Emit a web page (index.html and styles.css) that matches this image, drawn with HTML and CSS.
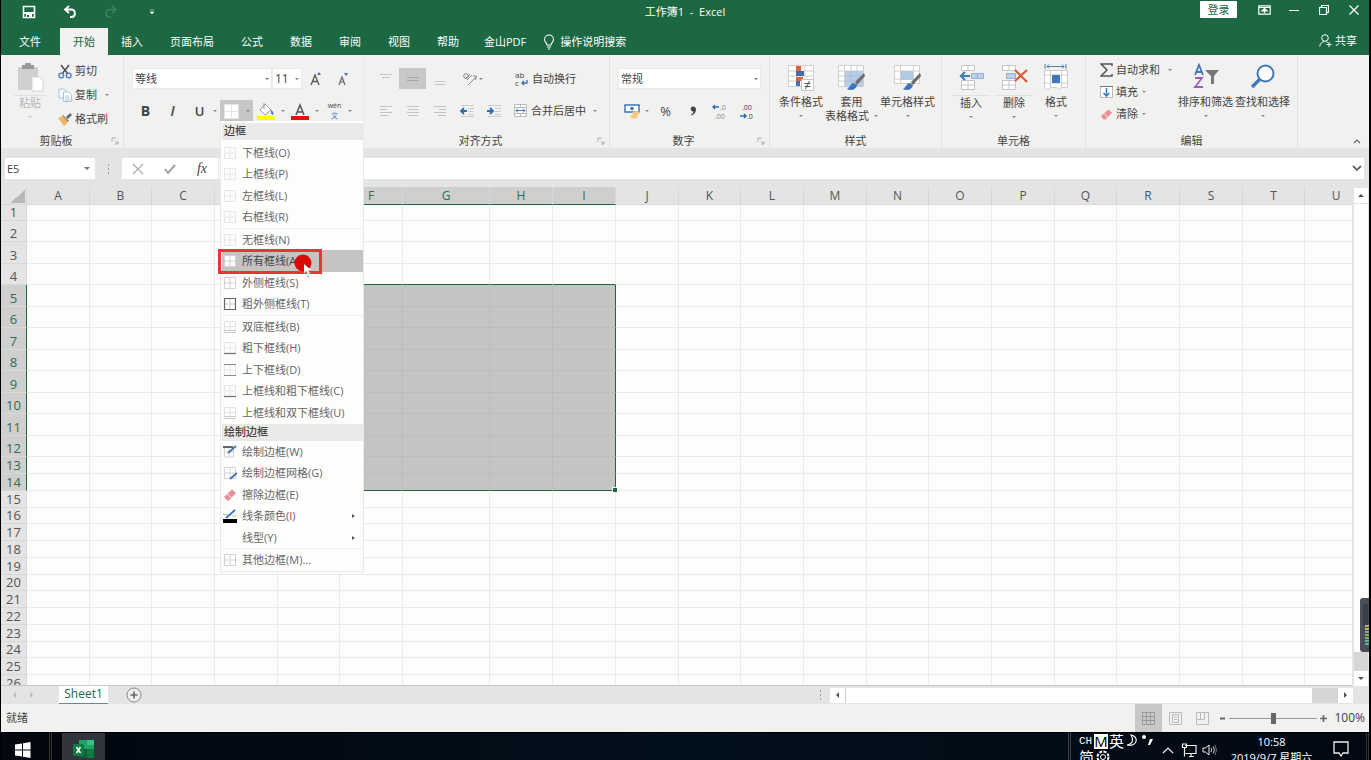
FILE: index.html
```html
<!DOCTYPE html>
<html lang="zh-CN">
<head>
<meta charset="utf-8">
<title>工作簿1 - Excel</title>
<link rel="stylesheet" href="styles.css">
</head>
<body>
<svg class="defs" aria-hidden="true">
  <symbol id="cells" viewBox="0 0 14 14"><path d="M1.500 1.500h11v11h-11zM7 1.500v11M1.500 7h11" fill="#fff" stroke="#cfcfd4"/></symbol>
  <symbol id="cells-none" viewBox="0 0 14 14"><path d="M1.500 1.500h11v11h-11zM7 1.500v11M1.500 7h11" fill="none" stroke="#e6e6e8"/></symbol>
  <symbol id="cells-thick" viewBox="0 0 14 14"><path d="M7 2v10M2 7h10" stroke="#ccc"/><path d="M1.500 1.500h11v11h-11z" fill="none" stroke="#666" stroke-width="1.200"/></symbol>
  <symbol id="cells-bottom" viewBox="0 0 14 14"><path d="M1.500 12V1.500h11V12M7 2v10M2 7h10" fill="none" stroke="#e6e6e8"/><path d="M1 12.500h12" stroke="#777" stroke-width="1.300"/></symbol>
  <symbol id="cells-topbottom" viewBox="0 0 14 14"><path d="M1.500 2v10M12.500 2v10M7 2v10M2 7h10" stroke="#e6e6e8"/><path d="M1 1.500h12M1 12.500h12" stroke="#888"/></symbol>
  <symbol id="cells-double" viewBox="0 0 14 14"><path d="M1.500 12V1.500h11V12M7 2v8M2 6.500h10" fill="none" stroke="#e3e3e6"/><path d="M1 10.500h12M1 12.500h12" stroke="#ccc"/></symbol>
  <symbol id="eraser" viewBox="0 0 14 14"><path d="M9 1.500 13 5 6 12.500H4L1 9z" fill="#e8909a"/><path d="M4.500 6 8.500 10" stroke="#fff"/></symbol>
  <symbol id="launcher" viewBox="0 0 8 8"><path d="M1 5V1h4M4 4l3 3M7 4v3H4" fill="none" stroke="#b0b0b0"/></symbol>
  <symbol id="brush" viewBox="0 0 20 20"><path d="m18 1-9 9 2 3 8-9z" fill="#6c6c6c"/><path d="M8 11c-3 0-3 3-7 6 4 2 9 1 10-4z" fill="#3f76b9"/></symbol>
</svg>
<div class="app">
  <header class="titlebar">
    <div class="quick">
      <button aria-label="保存"><svg width="14" height="14" viewBox="0 0 14 14"><path d="M1.500 1.500h11v11h-11z" fill="none" stroke="#fff" stroke-width="1.600"/><path d="M2 7h10v2H2zM4 9h6v4H4z" fill="#fff"/><path d="M5 10h2v2H5z" fill="#1b6843"/></svg></button>
      <button aria-label="撤消"><svg width="14" height="14" viewBox="0 0 14 14"><path d="M6 1 2 4.500 6 8M2 4.500h6c5 0 5 7 1 7.500H7" fill="none" stroke="#fff" stroke-width="1.800"/></svg></button>
      <button aria-label="恢复"><svg width="14" height="14" viewBox="0 0 14 14"><path d="m8 1 4 3.500L8 8M12 4.500H6C1 4.500 1 11.500 5 12h2" fill="none" stroke="#42805f" stroke-width="1.600"/></svg></button>
      <button aria-label="自定义快速访问工具栏"><svg width="6" height="6" viewBox="0 0 6 6"><path d="M1 1h4M1 3h4L3 5z" fill="#fff" stroke="#fff" stroke-width=".5"/></svg></button>
    </div>
    <h1 class="title">工作簿1 &nbsp;-&nbsp; Excel</h1>
    <div class="window-actions">
      <button class="login">登录</button>
      <button aria-label="功能区显示选项"><svg width="13" height="10" viewBox="0 0 13 10"><path d="M.8.8h11.400v8.400H.8zM1 2.500h11M6.500 8V4M4.500 5.500l2-2 2 2M3 6h7" fill="none" stroke="#fff" stroke-width="1.200"/></svg></button>
      <button aria-label="最小化"><svg width="10" height="10" viewBox="0 0 10 10"><path d="M0 5.500h10" stroke="#fff"/></svg></button>
      <button aria-label="还原"><svg width="10" height="10" viewBox="0 0 10 10"><path d="M.5 2.500h7v7h-7zM2.500 2V.5h7v7H8" fill="none" stroke="#fff" stroke-width="1.200"/></svg></button>
      <button aria-label="关闭"><svg width="10" height="10" viewBox="0 0 10 10"><path d="m.5.5 9 9m0-9-9 9" stroke="#fff" stroke-width="1.200"/></svg></button>
    </div>
  </header>

  <nav class="tabs">
    <button class="file">文件</button>
    <button class="active">开始</button>
    <button>插入</button>
    <button>页面布局</button>
    <button>公式</button>
    <button>数据</button>
    <button>审阅</button>
    <button>视图</button>
    <button>帮助</button>
    <button class="pdf">金山PDF</button>
    <button class="tell"><svg width="12" height="16" viewBox="0 0 12 16"><path d="M4 11C4 9 1.500 8 1.500 5.500a4.500 4.500 0 0 1 9 0C10.500 8 8 9 8 11zM4 13h4M5 15h2" fill="none" stroke="#fff" stroke-width="1.100"/></svg>操作说明搜索</button>
    <button class="share"><svg width="13" height="13" viewBox="0 0 13 13"><circle cx="6" cy="4" r="3.300" fill="none" stroke="#fff"/><path d="M.8 12.500C1 9.500 3 7.800 5.500 7.500M7 7.500l1.500 1M10 8v5M7.500 10.500h5" fill="none" stroke="#fff"/></svg>共享</button>
  </nav>

  <section class="ribbon" aria-label="开始">
    <div class="group clipboard">
      <div class="tools">
        <button class="big disabled"><svg width="28" height="30" viewBox="0 0 28 30"><path d="M2 4h20v23H2z" fill="#cfcfd1"/><path d="M6 2h3a3 3 0 0 1 6 0h3v4H6z" fill="#9a9a9c"/><path d="M16 14h7l4 4v10H16z" fill="#fff" stroke="#d5d5d7"/></svg><span class="split">粘贴</span><i class="caret"></i></button>
        <div class="stack clip-stack">
          <button><svg width="14" height="15" viewBox="0 0 14 15"><path d="m3 1 7 9M11 1 4 10" stroke="#555" stroke-width="1.600"/><circle cx="3.300" cy="11.500" r="2.400" fill="none" stroke="#4a7fb8" stroke-width="1.300"/><circle cx="10.700" cy="11.500" r="2.400" fill="none" stroke="#4a7fb8" stroke-width="1.300"/></svg>剪切</button>
          <button><svg width="14" height="14" viewBox="0 0 14 14"><path d="M1 1h5l2 2v7H1z" fill="#f6fafd" stroke="#a9c4dd"/><path d="M5.500 4h5l3 3v6.500h-8z" fill="#fff" stroke="#a9c4dd"/><path d="M7 8h4M7 10h5M7 12h5" stroke="#a9c4dd"/></svg>复制<i class="caret"></i></button>
          <button><svg width="14" height="14" viewBox="0 0 14 14"><path d="m8 5 4-4 2 2-4 4z" fill="#6a6a6a"/><path d="m5 3 6 6-2 1-5-6z" fill="#777"/><path d="M0 6l5-2 5 6-4 4z" fill="#efb662"/></svg>格式刷</button>
        </div>
      </div>
      <div class="caption"><span>剪贴板</span><svg width="8" height="8"><use href="#launcher"/></svg></div>
    </div>

    <div class="group font">
      <div class="tools rows">
        <div class="line">
          <span class="combo font-name"><select aria-label="字体"><option>等线</option></select></span><span class="combo font-size"><select aria-label="字号"><option>11</option></select></span>
          <button class="slot" aria-label="增大字号"><svg width="16" height="18" viewBox="0 0 16 18"><path d="m3 15 4-10 4 10M4.500 11.500h5" fill="none" stroke="#555" stroke-width="1.300"/><path d="m9 5 2-3 2 3z" fill="#3f76b9"/></svg></button>
          <button class="slot" aria-label="减小字号"><svg width="16" height="18" viewBox="0 0 16 18"><path d="m4 15 3-8 3 8M5 12h4" fill="none" stroke="#666" stroke-width="1.200"/><path d="m9 3 2 3 2-3z" fill="#3f76b9"/></svg></button>
        </div>
        <div class="line">
          <button class="slot bold">B</button>
          <button class="slot italic">I</button>
          <button class="slot underline">U</button><i class="caret"></i>
          <div class="border-picker">
            <button class="border-button" aria-label="边框" aria-expanded="true"><svg width="16" height="16" viewBox="0 0 16 16"><path d="M.5 1.500h14v14H.5zM7.500 1.500v14M.5 8.500h14" fill="#fff" stroke="#e4e4e4"/></svg><i class="caret"></i></button>
            <div class="menu" role="menu">
              <h2>边框</h2>
              <div class="menu-group">
                <button><svg><use href="#cells-none"/></svg>下框线(O)</button>
                <button><svg><use href="#cells-none"/></svg>上框线(P)</button>
                <button><svg><use href="#cells-none"/></svg>左框线(L)</button>
                <button><svg><use href="#cells-none"/></svg>右框线(R)</button>
              </div>
              <div class="menu-group">
                <button><svg><use href="#cells-none"/></svg>无框线(N)</button>
                <button class="hover"><svg><use href="#cells"/></svg>所有框线(A)<span class="focus-box"></span><svg class="pointer" viewBox="0 0 20 26"><circle cx="9" cy="10" r="8.500" fill="#d90b06"/><path d="M10 11v9l2-2 2 4 2-1-2-4h3z" fill="#fff"/><path d="m10 21 2-2M13 23l2 1M16 20l1-1" stroke="#999"/></svg></button>
                <button><svg><use href="#cells"/></svg>外侧框线(S)</button>
                <button><svg><use href="#cells-thick"/></svg>粗外侧框线(T)</button>
              </div>
              <div class="menu-group last">
                <button><svg><use href="#cells-double"/></svg>双底框线(B)</button>
                <button><svg><use href="#cells-bottom"/></svg>粗下框线(H)</button>
                <button><svg><use href="#cells-topbottom"/></svg>上下框线(D)</button>
                <button><svg><use href="#cells-bottom"/></svg>上框线和粗下框线(C)</button>
                <button><svg><use href="#cells-double"/></svg>上框线和双下框线(U)</button>
              </div>
              <h2>绘制边框</h2>
              <div class="menu-group">
                <button><svg viewBox="0 0 14 14"><path d="M1.500 2v10h9V5M6 3v9M2 7h8" fill="none" stroke="#d5d5d8"/><path d="M0 2h10" stroke="#666" stroke-width="2"/><path d="M5 8 13 1" stroke="#3f76b9" stroke-width="2"/></svg>绘制边框(W)</button>
                <button><svg viewBox="0 0 14 14"><path d="M1.500 1.500h11v11h-11zM7 2v10M2 7h10" fill="none" stroke="#d5d5d8"/><path d="M7 13 14 7" stroke="#3f76b9" stroke-width="2"/></svg>绘制边框网格(G)</button>
                <button><svg><use href="#eraser"/></svg>擦除边框(E)</button>
                <button><svg viewBox="0 0 14 14"><path d="M0 10h14v4H0z"/><path d="M3 9 12 1" stroke="#3f76b9" stroke-width="1.800"/><path d="M0 5.500h5M9 7h4" stroke="#bbb"/></svg>线条颜色(I)<i class="sub"></i></button>
                <button><svg></svg>线型(Y)<i class="sub"></i></button>
              </div>
              <div class="menu-group last">
                <button><svg><use href="#cells"/></svg>其他边框(M)...</button>
              </div>
            </div>
          </div>
          <button class="slot fill" aria-label="填充颜色"><svg width="18" height="18" viewBox="0 0 18 18"><path d="m8 2 6 6-6 5-5-5zM7 1v6" fill="#fff" stroke="#999"/><path d="M14 8c2 1 3 3 2 5-2 0-2-3-2-5z" fill="#3f76b9"/><path d="M0 14h18v4H0z" fill="#ff0"/></svg></button><i class="caret"></i>
          <button class="slot fill" aria-label="字体颜色"><svg width="18" height="18" viewBox="0 0 18 18"><path d="M5 13 9 3l4 10M6.500 10h5" fill="none" stroke="#555" stroke-width="1.500"/><path d="M0 14h18v4H0z" fill="#e8100c"/></svg></button><i class="caret"></i>
          <button class="slot pinyin" aria-label="拼音指南"><span>wén</span><span class="wen">文</span></button><i class="caret"></i>
        </div>
      </div>
    </div>

    <div class="group align">
      <div class="tools rows">
        <div class="line">
          <button class="slot" aria-label="顶端对齐"><svg width="14" height="18" viewBox="0 0 14 18"><path d="M1 4.500h12M3 7.500h8" stroke="#c4c4c4"/></svg></button>
          <button class="slot pressed" aria-label="垂直居中"><svg width="14" height="14" viewBox="0 0 14 14"><path d="M1 5.500h12M1 8.500h12" stroke="#a6a6a6"/></svg></button>
          <button class="slot" aria-label="底端对齐"><svg width="14" height="18" viewBox="0 0 14 18"><path d="M2 11.500h10M2 14.500h10" stroke="#c4c4c4"/></svg></button>
          <button class="slot orient" aria-label="方向"><svg width="16" height="16" viewBox="0 0 16 16"><path d="M6 14 14 6M11 5l3.500 0-1 4" fill="none" stroke="#888"/><circle cx="4" cy="5" r="2.300" fill="none" stroke="#888"/><path d="m3 8 5-5M5 9l5-5" stroke="#888"/></svg><i class="caret"></i></button>
          <button class="labelled"><svg width="14" height="20" viewBox="0 0 14 20"><text x="0" y="9" class="letters">ab</text><text x="0" y="17" class="letters">c</text><path d="M12 11v3H7m2-2-2 2 2 2" fill="none" stroke="#3f76b9" stroke-width="1.400"/></svg>自动换行</button>
        </div>
        <div class="line">
          <button class="slot" aria-label="左对齐"><svg width="14" height="14" viewBox="0 0 14 14"><path d="M1 2.500h12M1 5.500h7M1 8.500h12M1 11.500h8" stroke="#c4c4c4"/></svg></button>
          <button class="slot" aria-label="居中"><svg width="14" height="14" viewBox="0 0 14 14"><path d="M1 2.500h12M2 5.500h10M1 8.500h12M2 11.500h10" stroke="#c4c4c4"/></svg></button>
          <button class="slot" aria-label="右对齐"><svg width="14" height="14" viewBox="0 0 14 14"><path d="M1 2.500h12M6 5.500h7M1 8.500h12M5 11.500h8" stroke="#c4c4c4"/></svg></button>
          <button class="slot" aria-label="减少缩进"><svg width="16" height="14" viewBox="0 0 16 14"><path d="M2 1.500h13M9 4.500h6M9 7.500h6M9 10.500h6M2 12.500h13" stroke="#ccc"/><path d="M8 7H2m3-3L2 7l3 3" fill="none" stroke="#2f6eb5" stroke-width="1.800"/></svg></button>
          <button class="slot" aria-label="增加缩进"><svg width="16" height="14" viewBox="0 0 16 14"><path d="M2 1.500h13M9 4.500h6M9 7.500h6M9 10.500h6M2 12.500h13" stroke="#ccc"/><path d="M1 7h6M4 4l3 3-3 3" fill="none" stroke="#2f6eb5" stroke-width="1.800"/></svg></button>
          <button class="labelled merge"><svg width="13" height="13" viewBox="0 0 13 13"><path d="M.5.500h12v12H.5zM.5 3.500h12M.5 9.500h12M6.500 1v3M6.500 9v3" fill="#fff" stroke="#bbb"/><path d="M2 6.500h9M4 4.500l-2 2 2 2M9 4.500l2 2-2 2" fill="none" stroke="#3f76b9"/></svg>合并后居中<i class="caret"></i></button>
        </div>
      </div>
      <div class="caption"><span>对齐方式</span><svg width="8" height="8"><use href="#launcher"/></svg></div>
    </div>

    <div class="group number">
      <div class="tools rows">
        <div class="line"><span class="combo format"><select aria-label="数字格式"><option>常规</option></select></span></div>
        <div class="line">
          <button class="slot" aria-label="会计数字格式"><svg width="16" height="16" viewBox="0 0 16 16"><path d="M1 2h14v7H1z" fill="#fff" stroke="#3f76b9" stroke-width="1.500"/><circle cx="8" cy="5.500" r="1.800" fill="#3f76b9"/><ellipse cx="12" cy="10" rx="3.500" ry="2" fill="#f0c987"/><ellipse cx="10" cy="13.500" rx="3.500" ry="2" fill="#f0c987"/></svg></button><i class="caret"></i>
          <button class="slot percent">%</button>
          <button class="slot" aria-label="千位分隔样式"><svg width="10" height="14" viewBox="0 0 10 14"><path d="M5 2.500a2.500 2.500 0 1 0 .5 5C5.500 9 4 10 3 10.500l.5 1C6 10.500 8 8.500 8 5.500c0-2-1.500-3-3-3z" fill="#444"/></svg></button>
          <button class="slot" aria-label="增加小数位数"><svg width="16" height="20" viewBox="0 0 16 20"><path d="M7 6H1m2-2L1 6l2 2" fill="none" stroke="#2f6eb5" stroke-width="1.500"/><text x="8" y="9" class="tiny">.0</text><text x="3" y="18" class="tiny">.00</text></svg></button>
          <button class="slot" aria-label="减少小数位数"><svg width="16" height="20" viewBox="0 0 16 20"><path d="M1 15h6M5 13l2 2-2 2" fill="none" stroke="#2f6eb5" stroke-width="1.500"/><text x="3" y="9" class="tiny dark">.00</text><text x="8" y="18" class="tiny dark">.0</text></svg></button>
        </div>
      </div>
      <div class="caption"><span>数字</span><svg width="8" height="8"><use href="#launcher"/></svg></div>
    </div>

    <div class="group styles">
      <div class="tools">
        <button class="big"><svg width="28" height="30" viewBox="0 0 28 30"><path d="M1.500 2.500h25v21h-25zM9.500 2v22M18 2v22M2 8h25M2 13h25M2 18h25" fill="#fff" stroke="#cfcfd1"/><path d="M9 3h5v5H9zM9 14h7v4H9z" fill="#e0603a"/><path d="M9 8h8v5H9zM9 18h4v5H9z" fill="#3f6fb0"/><path d="M14.500 16.500h12v11h-12z" fill="#fff" stroke="#c4c4c4"/><path d="M17.500 20.500h6M17.500 23.500h6M22.500 18l-4 8" stroke="#555"/></svg><span>条件格式</span><i class="caret"></i></button>
        <button class="big"><svg width="28" height="30" viewBox="0 0 28 30"><path d="M.5 2.500h25v21H.5zM6.500 2v22M13 2v22M19 2v22M1 8h25M1 13h25M1 18h25" fill="#fff" stroke="#cfcfd1"/><path d="M7 8h18v16H7z" fill="#b9cde5"/><path d="M7 13h18M7 18h18M13 8v16M19 8v16" stroke="#a9c0dc"/><use href="#brush" x="8" y="9" width="20" height="20"/></svg><span>套用</span><span>表格格式<i class="caret"></i></span></button>
        <button class="big"><svg width="28" height="30" viewBox="0 0 28 30"><path d="M.5 2.500h25v18H.5zM6.500 2v18M19.500 2v18M1 8h25M1 16h25" fill="#fff" stroke="#cfcfd1"/><path d="M7 8h12v9H7z" fill="#b3cae6"/><use href="#brush" x="8" y="9" width="20" height="20"/></svg><span>单元格样式</span><i class="caret"></i></button>
      </div>
      <div class="caption"><span>样式</span></div>
    </div>

    <div class="group cells">
      <div class="tools">
        <button class="big"><svg width="28" height="30" viewBox="0 0 28 30"><path d="M4.500 2.500h13v5h-13zM11 2v5M4.500 17.500h13v9h-13zM11 17v9M4 22h13" fill="#fff" stroke="#c4c4c6"/><path d="M14.500 10.500h12v5h-12zM20.500 10v5" fill="#bcd2ec" stroke="#94b1d3"/><path d="M13 13H3m5-4-4 4 4 4" fill="none" stroke="#3f7fc0" stroke-width="2.200"/></svg><span class="split">插入</span><i class="caret"></i></button>
        <button class="big"><svg width="28" height="30" viewBox="0 0 28 30"><path d="M2.500 2.500h13v5h-13zM9 2v5M2.500 17.500h13v9h-13zM9 17v9M2 22h13" fill="#fff" stroke="#c4c4c6"/><path d="M6.500 10.500h9v5h-9z" fill="#bcd2ec" stroke="#94b1d3"/><path d="m15 7 12 12M27 7 15 18" stroke="#dc5a35" stroke-width="2.200"/></svg><span class="split">删除</span><i class="caret"></i></button>
        <button class="big format-cells"><svg width="28" height="30" viewBox="0 0 28 30"><path d="M2.500 7.500h23v17h-6l-2 2-3-2h-6l-3 2-3-2zM8.500 7v17M19.500 7v17M2 12h23M2 20h23" fill="#fff" stroke="#ccc"/><path d="M10 12h8v8h-8z" fill="#3f78b8"/><path d="M5 3.500h17M7 1.500l-2 2 2 2M20 1.500l2 2-2 2M3 1v5M24 1v5" fill="none" stroke="#4a7fb8"/></svg><span>格式</span><i class="caret"></i></button>
      </div>
      <div class="caption"><span>单元格</span></div>
    </div>

    <div class="group editing">
      <div class="tools">
        <div class="stack">
          <button><svg width="13" height="14" viewBox="0 0 13 14"><path d="M12 3V1H1l6 6-6 6h11v-2" fill="none" stroke="#555" stroke-width="1.500"/></svg>自动求和<i class="caret wide"></i></button>
          <button><svg width="13" height="14" viewBox="0 0 13 14"><path d="M.5 1.500h12v11H.5z" fill="#fff" stroke="#bbb"/><path d="M0 1.500h13" stroke="#777"/><path d="M6.500 3v8M3.500 8l3 3 3-3" fill="none" stroke="#3f7fc0" stroke-width="1.600"/></svg>填充<i class="caret"></i></button>
          <button><svg width="13" height="13"><use href="#eraser"/></svg>清除<i class="caret"></i></button>
        </div>
        <button class="big"><svg width="28" height="30" viewBox="0 0 28 30"><path d="m3 12 4-10 4 10M4.500 9h5" fill="none" stroke="#3f76b9" stroke-width="1.800"/><path d="M3 15h7L3 24h8" fill="none" stroke="#9a5fc0" stroke-width="1.800"/><path d="M13 7h14l-5 6v8h-3v-8z" fill="#777"/></svg><span>排序和筛选</span><i class="caret"></i></button>
        <button class="big"><svg width="28" height="30" viewBox="0 0 28 30"><circle cx="16.500" cy="10.500" r="8" fill="#fff" stroke="#3f76b9" stroke-width="2"/><path d="m11 16-8 8" stroke="#3f76b9" stroke-width="3.200"/></svg><span>查找和选择</span><i class="caret"></i></button>
      </div>
      <div class="caption"><span>编辑</span></div>
    </div>
    <button class="collapse" aria-label="折叠功能区"><svg width="8" height="6" viewBox="0 0 8 6"><path d="m1 5 3-3 3 3" fill="none" stroke="#666" stroke-width="1.200"/></svg></button>
  </section>

  <div class="formula-bar">
    <span class="combo name-box"><select aria-label="名称框"><option>E5</option></select></span>
    <span class="grip"></span>
    <div class="formula-actions">
      <button aria-label="取消"><svg width="12" height="12" viewBox="0 0 12 12"><path d="m1 1 10 10M11 1 1 11" stroke="#b0b0b0" stroke-width="1.400"/></svg></button>
      <button aria-label="输入"><svg width="12" height="12" viewBox="0 0 12 12"><path d="m1 6 3 4 7-8" fill="none" stroke="#a4a4a4" stroke-width="2"/></svg></button>
      <button class="fx">fx</button>
    </div>
    <input class="formula" aria-label="编辑栏">
    <button class="expand" aria-label="展开编辑栏"><svg width="10" height="7" viewBox="0 0 10 7"><path d="m1 1 4 4 4-4" fill="none" stroke="#666" stroke-width="1.800"/></svg></button>
  </div>

  <main class="workbook">
    <div class="sheet"><table id="grid"></table></div>
    <div class="vscroll">
      <button aria-label="向上滚动"><i class="arrow up"></i></button>
      <div class="vthumb"></div>
      <div class="vtrack"></div>
      <button aria-label="向下滚动"><i class="arrow down"></i></button>
      <svg class="meter" width="9" height="54" viewBox="0 0 9 54"><path d="M9 0H3Q0 0 0 3v48q0 3 3 3h6z" fill="#4b4e58"/><path d="M3 6h5v22H3z" fill="#35404c"/><path d="M5 28h4M5 31h4" stroke="#c9a868" stroke-width="2"/><path d="M5 34h4M5 37h4M5 40h4" stroke="#76b56b" stroke-width="2"/><path d="M5 43h4M5 46h4" stroke="#55b39b" stroke-width="2"/></svg>
    </div>
  </main>

  <div class="sheet-bar">
    <div class="sheet-nav"><i class="arrow left pale"></i><i class="arrow right pale"></i></div>
    <button class="sheet-tab">Sheet1</button>
    <button class="add-sheet" aria-label="新工作表"><svg width="16" height="16" viewBox="0 0 16 16"><circle cx="8" cy="8" r="7" fill="#eee" stroke="#888"/><path d="M8 4.500v7M4.500 8h7" stroke="#666" stroke-width="1.600"/></svg></button>
    <span class="grip bar-grip"></span>
    <div class="hscroll">
      <button aria-label="向左滚动"><i class="arrow left"></i></button>
      <div class="hthumb"></div>
      <div class="htrack"></div>
      <button aria-label="向右滚动"><i class="arrow right"></i></button>
    </div>
  </div>

  <footer class="status">
    <span class="ready">就绪</span>
    <button class="view selected" aria-label="普通"><svg width="13" height="13" viewBox="0 0 13 13"><path d="M.5.500h12v12H.5zM4.500.500v12M8.500.500v12M.5 4.500h12M.5 8.500h12" fill="none" stroke="#999"/></svg></button>
    <button class="view" aria-label="页面布局"><svg width="13" height="13" viewBox="0 0 13 13"><path d="M.5.500h12v12H.5zM3.500 2.500h6v8h-6zM5 5h3M5 7.500h3" fill="none" stroke="#bbb"/></svg></button>
    <button class="view" aria-label="分页预览"><svg width="13" height="13" viewBox="0 0 13 13"><path d="M.5.500h12v12H.5zM4.500.500v7h-4M8.500.500v7h-4" fill="none" stroke="#bbb"/></svg></button>
    <button class="zoom-step" aria-label="缩小"><svg width="7" height="7" viewBox="0 0 7 7"><path d="M1 3.500h5" stroke="#666" stroke-width="2"/></svg></button>
    <input type="range" class="zoom" min="0" max="100" value="50" aria-label="缩放">
    <button class="zoom-step" aria-label="放大"><svg width="7" height="7" viewBox="0 0 7 7"><path d="M0 3.500h7M3.500 0v7" stroke="#666" stroke-width="1.600"/></svg></button>
    <button class="zoom-value">100%</button>
  </footer>

  <div class="taskbar">
    <button class="start" aria-label="开始菜单"><svg width="16" height="16" viewBox="0 0 16 16"><path d="M0 2.500 7 1.500v6H0zM8 1.300 15.500 0v7.500H8zM0 8.500h7v6l-7-1zM8 8.500h7.500V16L8 14.700z" fill="#fff"/></svg></button>
    <span class="divider"></span>
    <button class="task" aria-label="Excel"><svg width="22" height="18" viewBox="0 0 22 18"><path d="M6 0h15v18H6z" fill="#21a366"/><path d="M14 0h7v5h-7z" fill="#33c481"/><path d="M6 9h8v9H6z" fill="#185c37"/><path d="M14 9h7v9h-7z" fill="#107c41"/><rect y="4" width="11" height="12" rx="1" fill="#107c41"/><path d="m3.500 7 4 6m0-6-4 6" stroke="#fff" stroke-width="1.500"/></svg></button>
    <span class="divider tray-divider"></span>
    <div class="ime">
      <div><span class="ch">CH</span><b>M</b><span>英</span><svg width="14" height="16" viewBox="0 0 14 16"><path d="M6 2c8 1 7 12-4 10 6-1 7-6 4-10z" fill="none" stroke="#fff" stroke-width="1.200"/></svg><svg width="14" height="16" viewBox="0 0 14 16"><circle cx="4" cy="4" r="2" fill="#fff"/><path d="M10 6h3l-3 6H8z" fill="#fff"/></svg></div>
      <div><span>简</span><svg width="16" height="16" viewBox="0 0 16 16"><circle cx="8" cy="8" r="5.500" fill="none" stroke="#fff" stroke-width="2" stroke-dasharray="3 1.300"/><circle cx="8" cy="8" r="2.500" fill="none" stroke="#fff"/></svg></div>
    </div>
    <button class="tray" aria-label="显示隐藏的图标"><svg width="12" height="8" viewBox="0 0 12 8"><path d="m1 7 5-5 5 5" fill="none" stroke="#eee" stroke-width="1.200"/></svg></button>
    <button class="tray" aria-label="网络"><svg width="16" height="14" viewBox="0 0 16 14"><path d="M4 2.500h11v8H4.500M1.500 1v3.500h4V1zM3.500 4.500v9M8 13.500h5M10 10.500v3" fill="none" stroke="#eee" stroke-width="1.200"/></svg></button>
    <button class="tray" aria-label="音量"><svg width="15" height="14" viewBox="0 0 15 14"><path d="M1 5h2.500L7 2v10L3.500 9H1z" fill="none" stroke="#eee"/><path d="M9 5q1.500 2 0 4M11 3.500q3 3.500 0 7" fill="none" stroke="#ccc"/><path d="M13 2q3 5 0 10" fill="none" stroke="#777"/></svg></button>
    <div class="clock"><time>10:58</time><span>2019/9/7 星期六</span></div>
    <button class="notify" aria-label="通知"><svg width="16" height="16" viewBox="0 0 16 16"><path d="M1 1h14v11h-5l-2 3-2-3H1z" fill="none" stroke="#eee" stroke-width="1.300"/></svg></button>
    <span class="divider"></span>
  </div>
</div>
<script src="grid.js"></script>
</body>
</html>
```

FILE: styles.css
```css
* { box-sizing: border-box; }
body {
  margin: 0;
  background: #000;
  color: #444;
  font: 11px/16px "Open Sans", "Noto Sans CJK SC", sans-serif;
}
button, select, input { font: inherit; color: inherit; }
button { margin: 0; padding: 0; border: 0; background: none; display: flex; align-items: center; justify-content: center; white-space: nowrap; }
h1, h2 { margin: 0; font-size: 11px; font-weight: 400; }
svg { flex: none; display: block; }
.defs { position: absolute; width: 0; height: 0; }
.app { height: 100vh; margin: 0 2px 0 1px; display: flex; flex-direction: column; overflow: hidden; }

/* Title bar */
.titlebar { height: 28px; flex: none; display: flex; background: #1b6843; color: #fff; }
.quick, .window-actions { flex: 1; display: flex; align-items: flex-start; }
.quick button { width: 41px; height: 24px; }
.quick button:first-child { margin-left: 7px; }
.title { line-height: 24px; }
.window-actions { justify-content: flex-end; }
.window-actions button { width: 30px; height: 19px; }
.window-actions .login { width: 37px; height: 17px; margin: 1px 12px 0 0; background: #fff; color: #1b6843; border-radius: 1px; }

/* Tabs */
.tabs { height: 27px; flex: none; display: flex; gap: 1px; background: #1b6843; color: #fff; }
.tabs button { padding: 0 13px; }
.tabs .file { padding: 0 18px; }
.tabs .active { background: #f1f1f0; color: #1b6843; margin-right: -1px; }
.tabs .pdf { padding: 0 11px; }
.tabs .tell { gap: 5px; padding: 0 5px; }
.tabs .share { margin-left: auto; padding: 0 12px 2px; gap: 3px; }

/* Ribbon */
.ribbon { height: 93px; flex: none; display: flex; background: #f1f1f0; }
.group { flex: none; display: flex; flex-direction: column; justify-content: space-between; border-right: 1px solid #e2e2e2; }
.clipboard { width: 123px; }
.font { width: 240px; border-color: #e8e8e8; }
.align { width: 246px; }
.number { width: 160px; }
.styles { width: 172px; }
.cells { width: 144px; }
.editing { width: 212px; }
.tools { display: flex; align-items: flex-start; padding: 8px 4px 0; }
.caption { display: flex; align-items: center; height: 15px; }
.caption span { flex: 1; text-align: center; }
.caption svg { margin-right: 4px; }
.caret { flex: none; width: 0; border: 2px solid transparent; border-top-color: #888; border-bottom: 0; display: inline-block; }
.big { flex-direction: column; flex: none; line-height: 14px; padding: 0 1px; }
.big .caret { margin-top: 6px; }
.big span .caret { margin: 0 0 3px 5px; }
.big svg { margin-bottom: 2px; }
.big .split { border-top: 1px solid #e0e0e0; padding: 0 8px; }
.disabled { color: #b5b5b5; }
.disabled .caret { border-top-color: #c9c9c9; }
.stack { display: flex; flex-direction: column; align-items: flex-start; }
.stack button { gap: 3px; height: 22px; }
.stack .caret { margin-left: 1px; }
.stack .wide { margin-left: 5px; }
.clipboard .tools { padding-left: 12px; }
.clipboard .big .split { padding: 0 5px; }
.clip-stack { margin: -4px 0 0 11px; }
.clip-stack button { height: 24px; }
.clip-stack .caret { margin-left: 5px; }
.styles .tools { padding-left: 8px; }
.cells .tools { padding-left: 9px; gap: 3px; }
.format-cells { margin-left: 4px; }
.editing .tools { padding: 4px 4px 0 14px; }
.editing .big { padding-top: 4px; }
.editing .stack { width: 77px; }

.rows { flex-direction: column; padding: 13px 8px 0; gap: 11px; }
.line { display: flex; align-items: center; height: 21px; }
.slot { width: 27px; height: 21px; }
.pressed { background: #c8c8c8; }
.combo { position: relative; display: block; height: 21px; background: #fff; border: 1px solid #e9e9e9; }
.combo::after { content: ""; position: absolute; right: 2px; top: 9px; border: 2px solid transparent; border-top-color: #777; border-bottom: 0; pointer-events: none; }
.combo select { appearance: none; width: 100%; height: 100%; border: 0; background: none; padding: 0 2px; }
.font-name { width: 140px; }
.font-size { width: 30px; }
.font-size select { font-size: 12px; }
.bold { font-size: 14px; font-weight: 700; }
.italic { font-size: 14px; font-weight: 600; font-style: italic; }
.underline { font-size: 13px; font-weight: 600; }
.underline + .caret { margin-right: 3px; }
.fill { width: 26px; }
.fill + .caret { margin: 0 2px; }
.pinyin { flex-direction: column; font-size: 7px; line-height: 10px; }
.pinyin .wen { color: #3f76b9; }
.percent { font-size: 13px; }
.orient { gap: 1px; width: 38px; }
.labelled { gap: 3px; margin-left: 24px; }
.merge { gap: 4px; margin-left: 7px; }
.merge .caret { margin-left: 3px; }
.number .line + .line .caret { margin-right: 3px; }
.format { width: 143px; }
.tiny { font: 7px "Open Sans", sans-serif; fill: #888; }
.letters { font: 8px "Open Sans", sans-serif; fill: #444; }
.tiny.dark { fill: #444; }
.collapse { margin: auto 8px 4px auto; }

/* Border menu */
.border-picker { position: relative; }
.border-button { width: 33px; height: 21px; background: #c6c6c6; gap: 6px; }
.menu { position: absolute; z-index: 5; top: 100%; left: 0; width: 144px; padding: 2px 0 0 1px; background: #fdfdfc; border: 1px solid #e9e9e9; border-top: 0; color: #666; }
.menu h2 { background: #e9e9e8; height: 17px; line-height: 16px; padding-left: 2px; font-weight: 500; color: #444; }
.menu-group { border-bottom: 1px solid #eee; }
.menu-group.last { border-bottom: 0; padding-bottom: 1px; }
.menu h2:first-child { margin-bottom: 2px; }
.menu button { position: relative; width: 100%; height: 21px; justify-content: flex-start; gap: 5px; padding-left: 1px; }
.menu button:nth-child(even) { height: 22px; }
.menu button svg { width: 14px; height: 14px; }
.menu .hover { background: #c4c4c3; color: #444; }
.menu .focus-box { position: absolute; left: -4px; top: -1px; width: 104px; height: 25px; border: 3px solid #ed3338; }
.menu .hover .pointer { position: absolute; left: 72px; top: 3px; width: 20px; height: 26px; }
.sub { margin: 0 8px 0 auto; border: 2px solid transparent; border-left: 3px solid #555; border-right: 0; }

/* Formula bar */
.formula-bar { height: 39px; flex: none; display: flex; align-items: center; background: #e4e4e4; padding: 2px 5px 0 4px; }
.name-box { width: 90px; border: 0; }
.name-box::after { right: 5px; border-width: 3px; border-bottom: 0; }
.grip { width: 3px; height: 12px; margin: 0 12px; background: radial-gradient(circle, #999 1px, transparent 1px) 0 0 / 3px 4px; }
.formula-actions { display: flex; background: #fff; height: 21px; margin-right: 1px; }
.formula-actions button { width: 32px; }
.formula-actions .fx { font: italic 14px "Liberation Serif", serif; }
.formula { flex: 1; min-width: 0; height: 21px; border: 0; padding: 0 4px; background: #fff; }
.expand { width: 14px; height: 21px; background: #fff; }

/* Grid */
.workbook { flex: 1; min-height: 0; display: flex; }
.sheet { flex: 1; min-width: 0; overflow: hidden; background: #fdfdfc; border-bottom: 1px solid #c8c8c8; }
#grid { table-layout: fixed; width: 1367px; border-spacing: 0; }
#grid col { width: 63px; }
#grid .narrow { width: 62px; }
#grid .wide { width: 87px; }
#grid .head-col { width: 26px; }
#grid th { padding: 0; background: #e4e4e4; border-right: 1px solid #d8d8d8; border-bottom: 1px solid #d8d8d8; font-weight: 400; line-height: 15px; font-size: 12px; color: #555; }
#grid tbody th { font-size: 13px; vertical-align: bottom; }
#grid td { padding: 0; border-right: 1px solid #ebebeb; border-bottom: 1px solid #ebebeb; }
#grid tr { height: 17px; }
#grid thead tr { height: 18px; }
#grid tbody tr:nth-child(1), #grid tbody tr:nth-child(4n) { height: 16px; }
#grid tbody .tall { height: 22px; }
#grid tbody .tall:nth-child(even) { height: 21px; }
#grid .corner { background: linear-gradient(to bottom right, transparent 50%, #b8b8b8 50%) 9px 3px / 15px 13px no-repeat #e4e4e4; }
#grid .on { background: #cfcfcf; color: #2c6f50; }
#grid thead .on { border-bottom-color: #1b6843; }
#grid tbody .on { border-right-color: #1b6843; }
#grid .picked { background: #c4c4c3; border-color: #bcbcbb; }
#grid .active-cell { background: #fdfdfc; }
#grid .edge-right { border-right-color: #1b6843; }
#grid .edge-bottom { border-bottom-color: #1b6843; }
#grid .edge-right.edge-bottom { position: relative; }
#grid .edge-right.edge-bottom::after { content: ""; position: absolute; right: -2px; bottom: -2px; width: 4px; height: 4px; background: #1b6843; border: 1px solid #fdfdfc; border-width: 1px 0 0 1px; }

.vscroll { position: relative; width: 17px; flex: none; display: flex; flex-direction: column; background: #e4e4e4; padding: 0 1px 0 2px; }
.vscroll button { height: 15px; background: #fff; margin-top: 1px; flex: none; }
.vscroll .vtrack + button { margin: 0; }
.vthumb { flex: 1; background: #fff; margin-top: 1px; }
.vtrack { height: 19px; background: #d6d6d6; }
.meter { position: absolute; right: 0; bottom: 34px; }
.arrow { width: 0; height: 0; border: 3px solid transparent; }
.up { border-bottom-color: #555; border-top: 0; }
.down { border-top-color: #555; border-bottom: 0; }
.left { border-right-color: #555; border-left: 0; }
.right { border-left-color: #555; border-right: 0; }
.left.pale { border-right-color: #bbb; }
.right.pale { border-left-color: #bbb; }

.sheet-bar { height: 18px; flex: none; display: flex; align-items: center; background: #e4e4e4; padding-right: 16px; }
.sheet-nav { width: 58px; display: flex; gap: 14px; padding-left: 12px; }
.sheet-tab { width: 49px; height: 18px; background: #fff; border-bottom: 1px solid #5c957a; color: #1b6843; font-size: 12px; padding-bottom: 1px; }
.add-sheet { margin-left: 18px; }
.bar-grip { margin: 0 8px 0 auto; }
.hscroll { flex: 0 0 523px; display: flex; height: 15px; }
.hscroll button { width: 15px; background: #fff; }
.hthumb { flex: 1; background: #fff; border-left: 1px solid #ccc; }
.htrack { width: 26px; background: #d6d6d6; }

/* Status bar */
.status { height: 28px; flex: none; display: flex; align-items: center; background: #f1f1f0; padding-right: 4px; }
.ready { flex: 1; padding-left: 5px; }
.view { width: 27px; height: 28px; }
.selected { background: #c8c8c8; }
.zoom-step { width: 13px; height: 20px; }
.zoom { appearance: none; width: 88px; height: 12px; margin: 0; background: linear-gradient(#999, #999) center / 100% 1px no-repeat; }
.zoom::-webkit-slider-thumb { appearance: none; width: 5px; height: 11px; background: #666; }
.zoom-value { font-size: 12px; margin-left: 4px; }

/* Taskbar */
.taskbar { height: 28px; flex: none; display: flex; align-items: flex-start; overflow: hidden; background: linear-gradient(90deg, #02060e, #02101c 50%, #020812); border-top: 1px solid #000; color: #fff; }
.start { width: 43px; height: 34px; }
.divider { width: 3px; height: 28px; border: 1px solid #34342f; border-width: 0 1px; margin: 0 5px; }
.task { width: 43px; height: 32px; background: #33353e; margin-left: 5px; }
.tray-divider { margin: 0 8px 0 auto; border-color: #3c4250; }
.ime { width: 78px; font-size: 15px; line-height: 16px; }
.ime div { display: flex; align-items: center; height: 16px; gap: 1px; }
.ime b { width: 14px; height: 15px; line-height: 15px; background: #fff; color: #000; font-weight: 400; text-align: center; }
.ime .ch { width: 14px; font: 11px/16px "Liberation Mono", monospace; }
.tray { width: 21px; height: 34px; }
.clock { width: 103px; display: flex; flex-direction: column; align-items: center; line-height: 16px; padding-top: 1px; }
.notify { width: 36px; height: 32px; }
.taskbar .divider:last-child { margin: 0 0 0 7px; }
```

FILE: grid.js
```js
const letters = [..."ABCDEFGHIJKLMNOPQRSTU"];
const narrow = "BEKNQT";
const selCols = [4, 8];
const selRows = [5, 14];
const within = (n, [a, b]) => n >= a && n <= b;

let html = '<colgroup><col class="head-col">' + letters.map(c =>
  `<col class="${c === "G" ? "wide" : narrow.includes(c) ? "narrow" : ""}">`).join("") + "</colgroup>";
html += '<thead><tr><th class="corner"></th>' + letters.map((c, i) =>
  `<th class="${within(i, selCols) ? "on" : ""}">${c}</th>`).join("") + "</tr></thead><tbody>";
for (let r = 1; r <= 26; r++) {
  const inRow = within(r, selRows);
  html += `<tr class="${r > 1 && r < 13 ? "tall" : ""}"><th class="${inRow ? "on" : ""}">${r}</th>`;
  letters.forEach((c, i) => {
    const inCol = within(i, selCols);
    const cls = [];
    if (inRow && inCol) cls.push("picked");
    if (r === selRows[0] && i === selCols[0]) cls.push("active-cell");
    if (inRow && (i === selCols[1] || i === selCols[0] - 1)) cls.push("edge-right");
    if (inCol && (r === selRows[1] || r === selRows[0] - 1)) cls.push("edge-bottom");
    html += `<td class="${cls.join(" ")}"></td>`;
  });
  html += "</tr>";
}
document.getElementById("grid").innerHTML = html + "</tbody>";
```
